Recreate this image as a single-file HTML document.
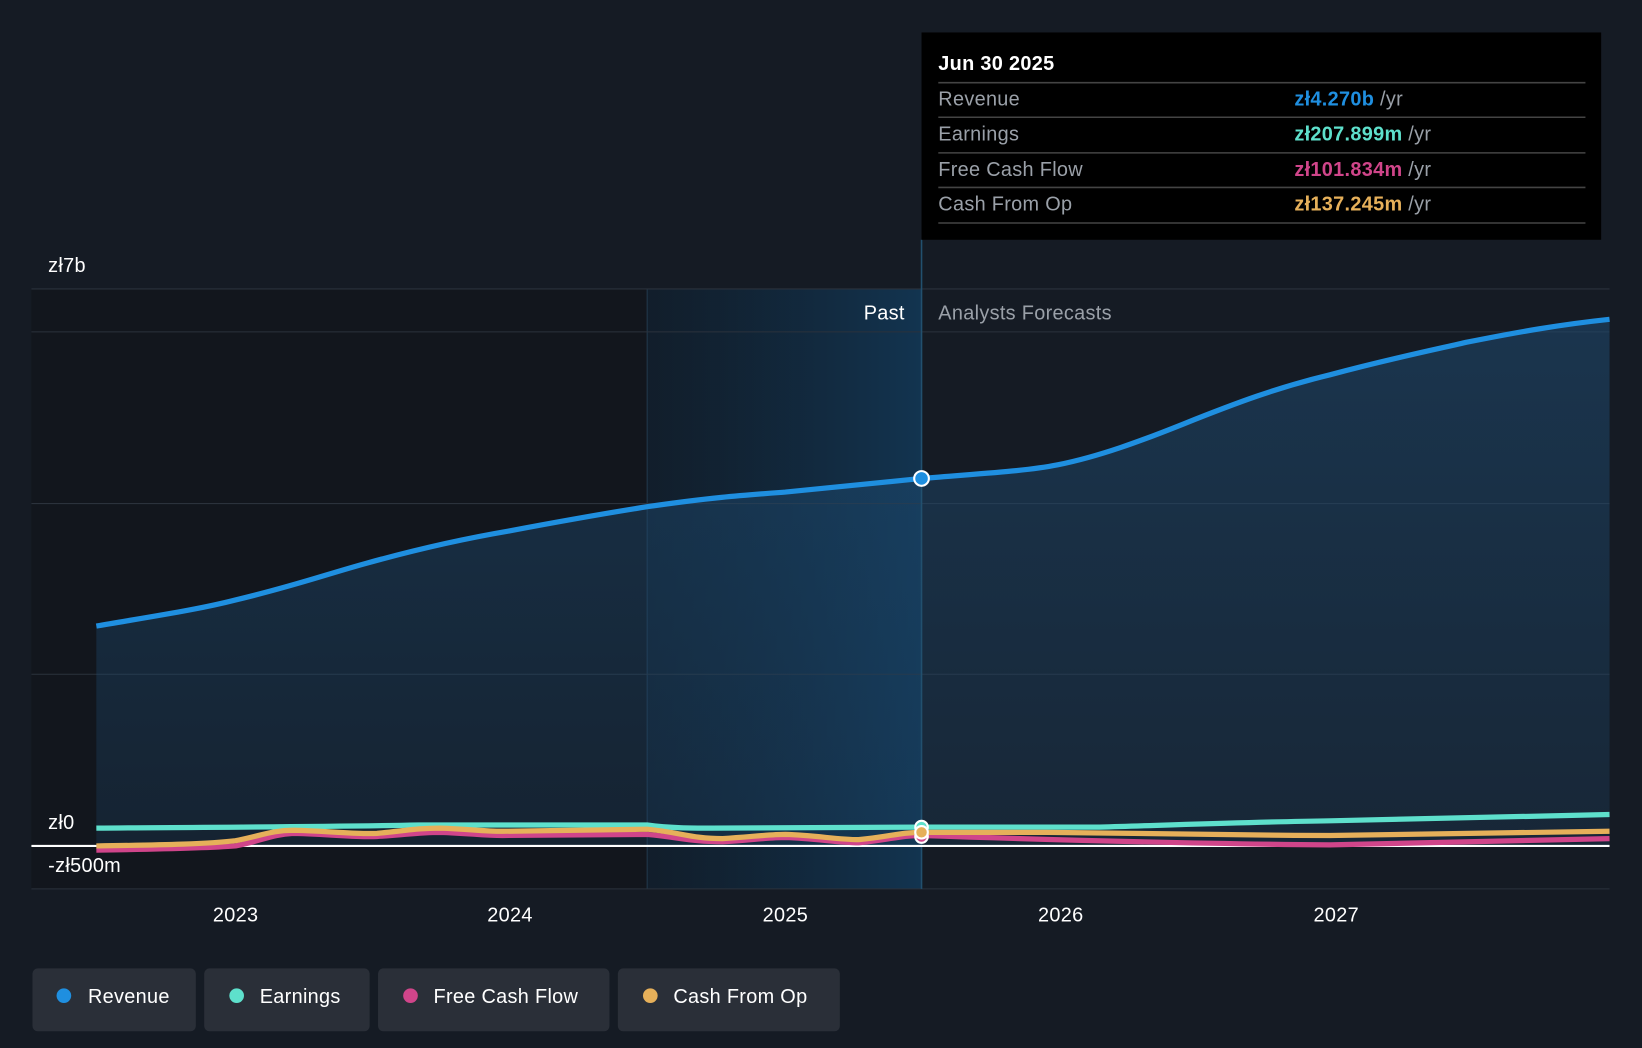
<!DOCTYPE html>
<html><head><meta charset="utf-8"><style>
html,body{margin:0;padding:0;background:#151b24;overflow:hidden}
svg{display:block}
text{font-family:"Liberation Sans",sans-serif;letter-spacing:0.3px}
</style></head><body>
<svg width="1642" height="1048" viewBox="0 0 1568 1001" preserveAspectRatio="none">
<defs>
<linearGradient id="hl" x1="0" x2="1" y1="0" y2="0"><stop offset="0" stop-color="#0f2030" stop-opacity="0.6"/><stop offset="1" stop-color="#123450"/></linearGradient>
<linearGradient id="rf" x1="0" x2="0" y1="0" y2="1"><stop offset="0" stop-color="#1e4a70" stop-opacity="0.55"/><stop offset="1" stop-color="#1e4a70" stop-opacity="0.25"/></linearGradient>
</defs>
<rect width="1568" height="1001" fill="#151b24"/>
<rect x="30" y="276" width="588" height="573" fill="#12161d"/>
<rect x="618" y="276" width="262" height="573" fill="url(#hl)"/>
<line x1="618" y1="276" x2="618" y2="849" stroke="#22384c"/>
<g stroke="#2b323c" stroke-width="1">
<line x1="30" y1="276" x2="1537" y2="276"/><line x1="30" y1="317" x2="1537" y2="317"/>
<line x1="30" y1="481" x2="1537" y2="481"/><line x1="30" y1="644" x2="1537" y2="644"/>
<line x1="30" y1="849" x2="1537" y2="849"/></g>
<path d="M92,598 C150,588 190,582 225,573 C280,560 310,549 350,538 C400,524 440,515 487,507 C540,497 580,490 618,484 C680,475 710,473 750,470 C800,465 840,461 880,457 C940,452 980,450 1010,444 C1050,436 1090,421 1130,405 C1180,385 1220,370 1270,358 C1330,342 1370,334 1400,327 C1450,317 1490,310 1537,305 L1537,808 L92,808 Z" fill="url(#rf)"/>
<path d="M92,598 C150,588 190,582 225,573 C280,560 310,549 350,538 C400,524 440,515 487,507 C540,497 580,490 618,484 C680,475 710,473 750,470 C800,465 840,461 880,457 C940,452 980,450 1010,444 C1050,436 1090,421 1130,405 C1180,385 1220,370 1270,358 C1330,342 1370,334 1400,327 C1450,317 1490,310 1537,305" fill="none" stroke="#1f8fe0" stroke-width="5"/>
<line x1="880" y1="229" x2="880" y2="849" stroke="#22506e" stroke-width="1.5"/>
<line x1="30" y1="808" x2="1537" y2="808" stroke="#ffffff" stroke-width="2"/>
<path d="M92,791 C200,790 300,790 400,788 L618,788 C640,791 660,791 680,791 L880,790 L1050,790 C1150,787 1200,785 1270,784 L1537,778" fill="none" stroke="#5ee0cc" stroke-width="5"/>
<path d="M92,812 C160,811 200,810 225,808 C250,803 260,797 280,796 C320,797 340,800 360,799 C390,797 400,795 420,795 C450,796 460,798 480,798 L618,797 C650,800 660,804 690,804 C720,802 735,800 750,800 C780,801 800,805 820,805 C850,802 860,798 880,798 C1000,802 1150,806 1270,807 L1537,801" fill="none" stroke="#d0458a" stroke-width="5"/>
<path d="M92,808 C160,807 200,806 225,803 C250,798 260,793 280,793 C320,794 340,797 360,796 C390,793 400,791 420,791 C450,792 460,794 480,794 L618,792 C650,795 660,801 690,801 C720,799 735,797 750,797 C780,798 800,802 820,802 C850,799 860,795 880,795 L1000,795 C1150,797 1200,798 1270,798 L1537,794" fill="none" stroke="#e6b05a" stroke-width="5"/>
<circle cx="880" cy="457" r="7" fill="#1f8fe0" stroke="#fff" stroke-width="2"/>
<circle cx="880" cy="790" r="6" fill="#5ee0cc" stroke="#fff" stroke-width="2"/>
<circle cx="880" cy="799" r="6" fill="#d0458a" stroke="#fff" stroke-width="2"/>
<circle cx="880" cy="795" r="6" fill="#e6b05a" stroke="#fff" stroke-width="2"/>
<text x="46" y="260" fill="#fff" font-size="19">zł7b</text>
<text x="46" y="792" fill="#fff" font-size="19">zł0</text>
<text x="46" y="833" fill="#fff" font-size="19">-zł500m</text>
<text x="864" y="305" fill="#fff" font-size="19" text-anchor="end">Past</text>
<text x="896" y="305" fill="#9aa0a8" font-size="19">Analysts Forecasts</text>
<g fill="#fff" font-size="19" text-anchor="middle">
<text x="225" y="880">2023</text><text x="487" y="880">2024</text><text x="750" y="880">2025</text><text x="1013" y="880">2026</text><text x="1276" y="880">2027</text></g>
<rect x="880" y="31" width="649" height="198" fill="#000"/>
<text x="896" y="67" fill="#fff" font-size="19" font-weight="bold">Jun 30 2025</text>
<g stroke="#444" stroke-width="1.5"><line x1="896" y1="79" x2="1514" y2="79"/><line x1="896" y1="112" x2="1514" y2="112"/><line x1="896" y1="146" x2="1514" y2="146"/><line x1="896" y1="179" x2="1514" y2="179"/><line x1="896" y1="213" x2="1514" y2="213"/></g>
<g font-size="19" fill="#9aa0a8">
<text x="896" y="101">Revenue</text><text x="896" y="134">Earnings</text><text x="896" y="168">Free Cash Flow</text><text x="896" y="201">Cash From Op</text></g>
<g font-size="19" font-weight="bold">
<text x="1236" y="101" fill="#1f8fe0">zł4.270b <tspan fill="#9aa0a8" font-weight="normal">/yr</tspan></text>
<text x="1236" y="134" fill="#5ee0cc">zł207.899m <tspan fill="#9aa0a8" font-weight="normal">/yr</tspan></text>
<text x="1236" y="168" fill="#d0458a">zł101.834m <tspan fill="#9aa0a8" font-weight="normal">/yr</tspan></text>
<text x="1236" y="201" fill="#e6b05a">zł137.245m <tspan fill="#9aa0a8" font-weight="normal">/yr</tspan></text></g>
<g font-size="19" fill="#fff">
<rect x="31" y="925" width="156" height="60" rx="5" fill="#2a2f38"/><circle cx="61" cy="951" r="7" fill="#1f8fe0"/><text x="84" y="958">Revenue</text>
<rect x="195" y="925" width="158" height="60" rx="5" fill="#2a2f38"/><circle cx="226" cy="951" r="7" fill="#5ee0cc"/><text x="248" y="958">Earnings</text>
<rect x="361" y="925" width="221" height="60" rx="5" fill="#2a2f38"/><circle cx="392" cy="951" r="7" fill="#d0458a"/><text x="414" y="958">Free Cash Flow</text>
<rect x="590" y="925" width="212" height="60" rx="5" fill="#2a2f38"/><circle cx="621" cy="951" r="7" fill="#e6b05a"/><text x="643" y="958">Cash From Op</text>
</g>
</svg>
</body></html>
